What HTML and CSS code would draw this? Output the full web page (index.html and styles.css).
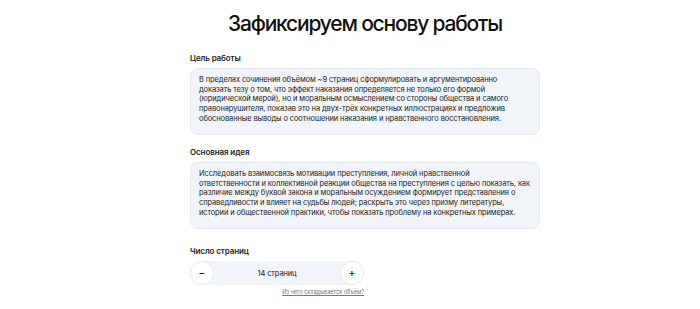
FILE: index.html
```html
<!DOCTYPE html>
<html lang="ru">
<head>
    <meta charset="UTF-8">
    <meta name="viewport" content="width=device-width, initial-scale=1.0">
    <title>Зафиксируем основу работы</title>
    <link rel="stylesheet" href="styles.css">
</head>
<body>
    <div class="page">
        <h1>Зафиксируем основу работы</h1>

        <div class="field">
            <div class="field-label">Цель работы</div>
            <div class="field-box">В пределах сочинения объёмом ~9 страниц сформулировать и аргументированно доказать тезу о том, что эффект наказания определяется не только его формой (юридической мерой), но и моральным осмыслением со стороны общества и самого правонарушителя, показав это на двух-трёх конкретных иллюстрациях и предложив обоснованные выводы о соотношении наказания и нравственного восстановления.</div>
        </div>

        <div class="field">
            <div class="field-label">Основная идея</div>
            <div class="field-box">Исследовать взаимосвязь мотивации преступления, личной нравственной ответственности и коллективной реакции общества на преступления с целью показать, как различие между буквой закона и моральным осуждением формирует представления о справедливости и влияет на судьбы людей; раскрыть это через призму литературы, истории и общественной практики, чтобы показать проблему на конкретных примерах.</div>
        </div>

        <div class="field field-pages">
            <div class="field-label">Число страниц</div>
            <div class="stepper">
                <button class="step-btn" id="minus">&minus;</button>
                <span class="step-value" id="pages">14 страниц</span>
                <button class="step-btn" id="plus">+</button>
            </div>
            <a class="hint" href="#">Из чего складывается объём?</a>
        </div>
    </div>
</body>
</html>
```

FILE: styles.css
```css
body {
    margin: 0;
    padding: 0;
    background: #fff;
    color: #1d1d1f;
    font-family: Inter, 'Noto Sans', sans-serif;
}

.page {
    width: 350px;
    margin: 0 auto;
    padding: 11px 0 0 30px;
    display: flex;
    flex-direction: column;
}

h1 {
    margin: 0 0 16px -40px;
    width: 430px;
    font-size: 21px;
    line-height: 26px;
    font-weight: 500;
    letter-spacing: -1.2px;
    text-align: center;
    color: #111;
}

.field {
    display: flex;
    flex-direction: column;
    margin-bottom: 12px;
}

.field-pages {
    margin-top: 5px;
}

.field-label {
    font-size: 8px;
    font-weight: 600;
    line-height: 10px;
    margin-bottom: 5px;
    letter-spacing: -0.1px;
    color: #222;
}

.field-box {
    background: #f1f4f8;
    border: 1px solid #e6eaf0;
    border-radius: 8px;
    padding: 6px 9px 8px 8px;
    min-height: 51px;
    font-size: 7.5px;
    line-height: 9.7px;
    letter-spacing: -0.12px;
    color: #242424;
}

.stepper {
    width: 174px;
    height: 24px;
    background: #f1f4f8;
    border-radius: 12px;
    display: flex;
    align-items: center;
    justify-content: space-between;
}

.step-btn {
    width: 24px;
    height: 24px;
    border-radius: 50%;
    background: #fff;
    border: 1px solid #e6eaf0;
    padding: 0;
    font-family: Inter, sans-serif;
    font-size: 11px;
    color: #222;
    cursor: pointer;
    display: flex;
    align-items: center;
    justify-content: center;
}

.step-value {
    font-size: 7.5px;
    letter-spacing: -0.12px;
    color: #222;
}

.hint {
    width: 174px;
    margin-top: 4px;
    text-align: right;
    font-size: 5.5px;
    color: #777;
}
```
